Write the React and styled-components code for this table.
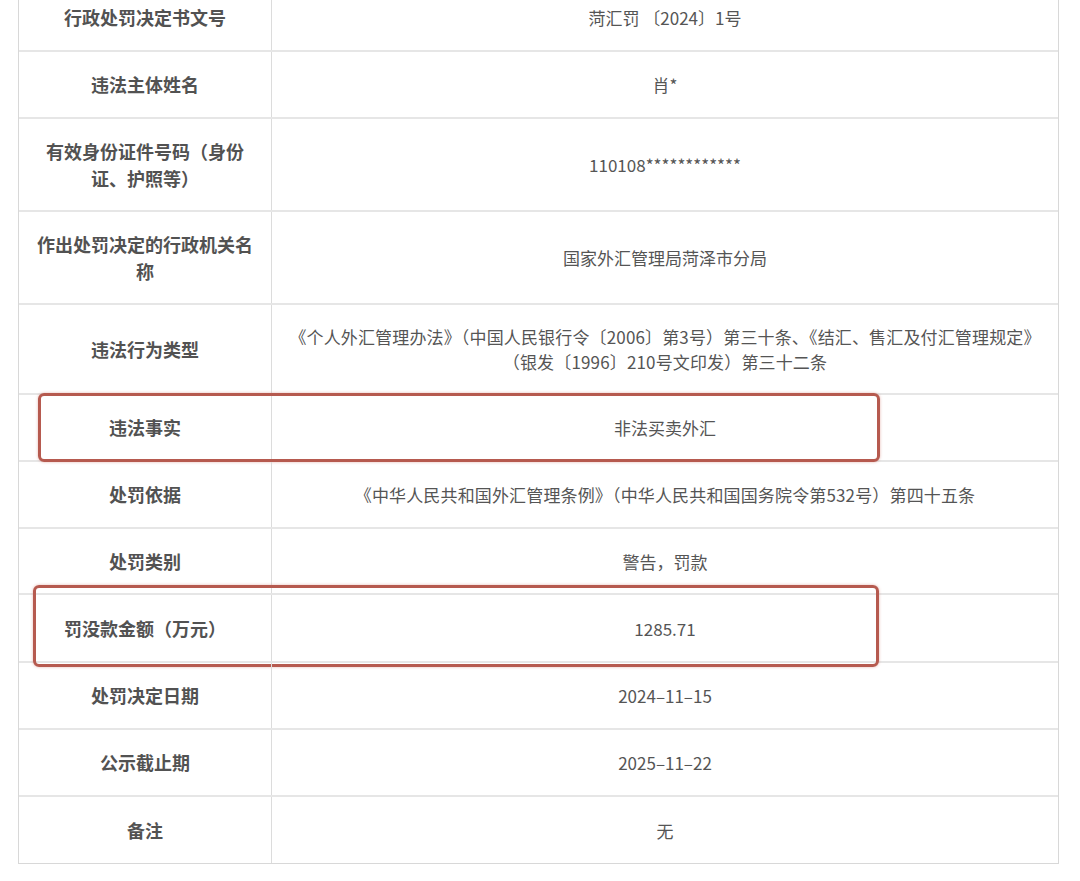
import React from "react";
import styled, { createGlobalStyle } from "styled-components";

const Global = createGlobalStyle`
  html, body { margin: 0; padding: 0; background: #ffffff; }
  body { font-family: "Noto Sans CJK SC", "Noto Sans", sans-serif; overflow: hidden; }
`;

const Page = styled.div`
  width: 1080px;
  height: 881px;
  overflow: hidden;
  background: #fff;
`;

const Table = styled.div`
  margin: -15px 0 0 18px;
  width: 1041px;
  box-sizing: border-box;
  border: 1px solid #d8d8d8;
  border-top: none;
  display: flex;
  flex-direction: column;
`;

const Row = styled.div`
  position: relative;
  display: grid;
  grid-template-columns: 253px 1fr;
  height: ${(p) => p.$h}px;
  box-sizing: border-box;
  border-bottom: ${(p) => (p.$last ? "none" : "2px solid #e6e6e6")};
`;

const Label = styled.div`
  display: flex;
  align-items: center;
  justify-content: center;
  text-align: center;
  padding: 0 10px;
  border-right: 1px solid #dcdcdc;
  font-size: 18px;
  line-height: 27px;
  font-weight: 700;
  color: #525252;
`;

const Value = styled.div`
  display: flex;
  align-items: center;
  justify-content: center;
  text-align: center;
  padding: 0 4px;
  font-size: 17px;
  line-height: 25px;
  font-weight: 400;
  color: #555555;
  white-space: nowrap;
  letter-spacing: ${(p) => (p.$wide ? "0.15px" : "0")};
`;

const Highlight = styled.div`
  position: absolute;
  left: ${(p) => p.$l}px;
  top: ${(p) => p.$t}px;
  width: ${(p) => p.$w}px;
  height: ${(p) => p.$hh}px;
  box-sizing: border-box;
  border: 3px solid #b65a4f;
  border-radius: 6px;
  box-shadow: 0 0 3px rgba(200, 90, 75, 0.45);
  pointer-events: none;
`;

const rows = [
  { h: 67, label: "行政处罚决定书文号", value: "菏汇罚 〔2024〕1号" },
  { h: 67, label: "违法主体姓名", value: "肖*" },
  {
    h: 93,
    label: (
      <>
        有效身份证件号码（身份
        <br />
        证、护照等）
      </>
    ),
    value: "110108************",
  },
  {
    h: 93,
    label: (
      <>
        作出处罚决定的行政机关名
        <br />
        称
      </>
    ),
    value: "国家外汇管理局菏泽市分局",
  },
  {
    h: 90,
    label: "违法行为类型",
    wide: true,
    value: (
      <>
        《个人外汇管理办法》（中国人民银行令〔2006〕第3号）第三十条、《结汇、售汇及付汇管理规定》
        <br />
        （银发〔1996〕210号文印发）第三十二条
      </>
    ),
  },
  { h: 67, label: "违法事实", value: "非法买卖外汇", hl: { l: 19, t: -2, w: 842, h: 69 } },
  {
    h: 67,
    label: "处罚依据",
    wide: true,
    value: "《中华人民共和国外汇管理条例》（中华人民共和国国务院令第532号）第四十五条",
  },
  { h: 66, label: "处罚类别", value: "警告，罚款" },
  { h: 68, label: "罚没款金额（万元）", value: "1285.71", hl: { l: 14, t: -10, w: 846, h: 82 } },
  { h: 67, label: "处罚决定日期", value: "2024–11–15" },
  { h: 67, label: "公示截止期", value: "2025–11–22" },
  { h: 66, label: "备注", value: "无", last: true },
];

export default function App() {
  return (
    <Page>
      <Global />
      <Table>
        {rows.map((r, i) => (
          <Row key={i} $h={r.h} $last={r.last}>
            <Label>{r.label}</Label>
            <Value $wide={r.wide}>{r.value}</Value>
            {r.hl && <Highlight $l={r.hl.l} $t={r.hl.t} $w={r.hl.w} $hh={r.hl.h} />}
          </Row>
        ))}
      </Table>
    </Page>
  );
}
